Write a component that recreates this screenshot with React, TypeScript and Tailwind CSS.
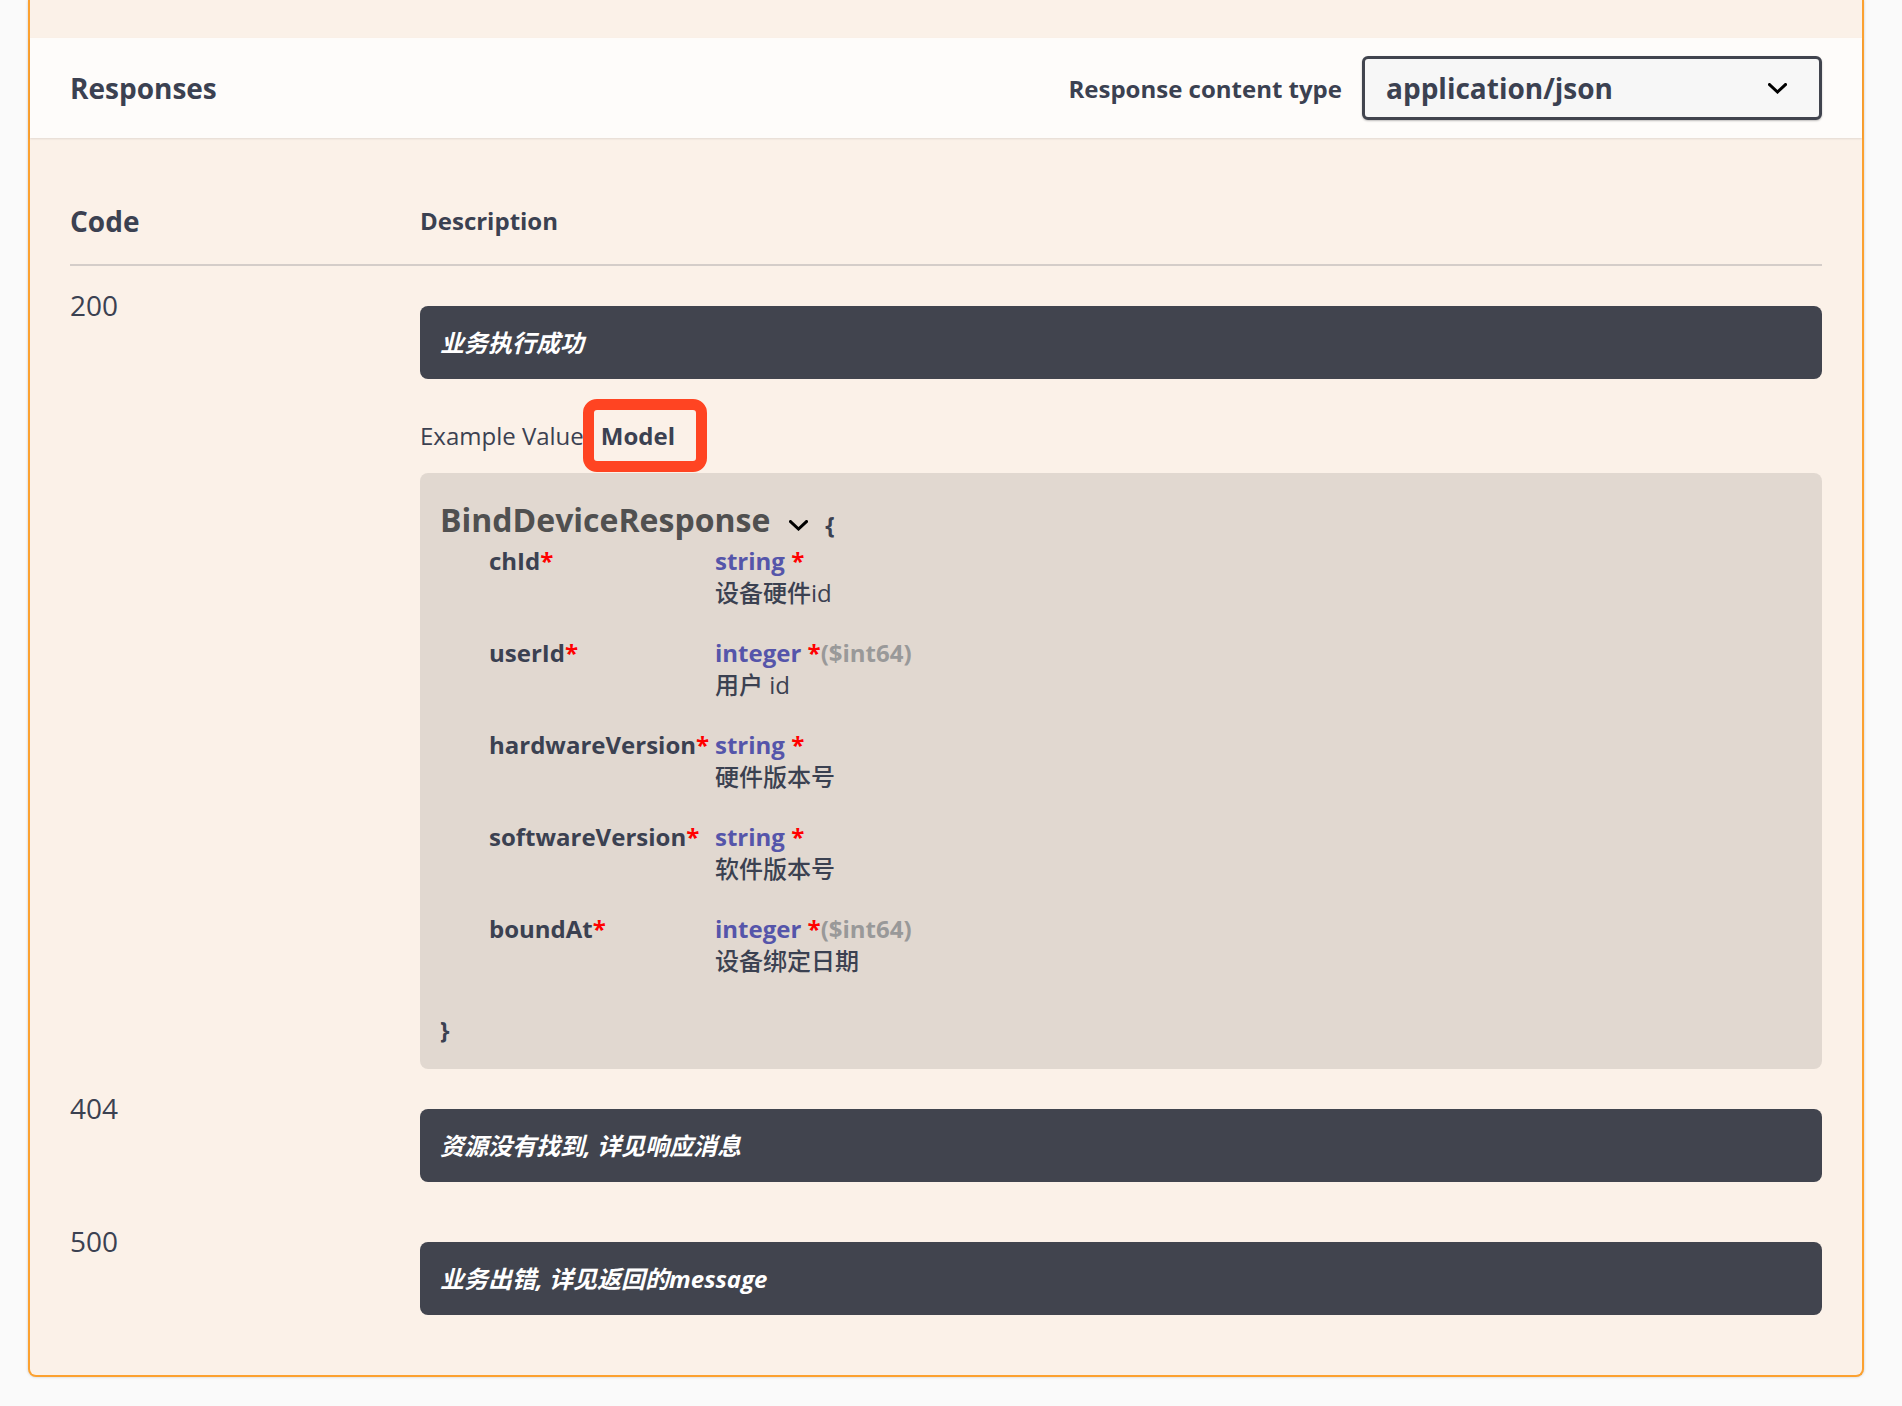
import React from 'react'

type Prop = {
  name: string
  type: string
  format?: string
  desc: string
}

const props: Prop[] = [
  { name: 'chId', type: 'string', desc: '设备硬件id' },
  { name: 'userId', type: 'integer', format: '($int64)', desc: '用户 id' },
  { name: 'hardwareVersion', type: 'string', desc: '硬件版本号' },
  { name: 'softwareVersion', type: 'string', desc: '软件版本号' },
  { name: 'boundAt', type: 'integer', format: '($int64)', desc: '设备绑定日期' },
]

function Chevron({ className }: { className?: string }) {
  return (
    <svg className={className} width="19" height="11" viewBox="0 0 19 11" fill="none">
      <path d="M1.5 1.5 L9.5 9 L17.5 1.5" stroke="#000" strokeWidth="3" strokeLinecap="square" />
    </svg>
  )
}

function DarkBox({ children }: { children: React.ReactNode }) {
  return (
    <div className="my-5 rounded-lg bg-[#41444e] p-5 text-[24px] leading-[33px] font-bold italic text-white">
      {children}
    </div>
  )
}

function Model() {
  return (
    <div className="mt-[21px] rounded-lg bg-black/10 px-5 pt-[25px] pb-[23px]">
      <div className="flex h-[44px] items-center">
        <span className="text-[32px] leading-[44px] font-bold text-[#505050]">BindDeviceResponse</span>
        <Chevron className="mt-[10px] ml-[19px]" />
        <span className="mt-2 ml-[17px] text-[24px] leading-[33px] font-bold">{'{'}</span>
      </div>
      <div className="mt-[3px] flex flex-col">
        {props.map((p) => (
          <div key={p.name} className="mb-[28px] flex pl-[49px] text-[24px] leading-[32px]">
            <div className="w-[226px] font-bold">
              {p.name}
              <span className="text-[#ff0000]">*</span>
            </div>
            <div>
              <div className="font-bold">
                <span className="text-[#5555aa]">{p.type}</span>{' '}
                <span className="text-[#ff0000]">*</span>
                {p.format && <span className="text-[#999999]">{p.format}</span>}
              </div>
              <div className="font-medium">{p.desc}</div>
            </div>
          </div>
        ))}
      </div>
      <div className="pt-[9px] text-[24px] leading-[32px] font-bold">{'}'}</div>
    </div>
  )
}

export default function App() {
  return (
    <div className="min-h-screen bg-[#fafafa] font-['Open_Sans','Noto_Sans_CJK_SC',sans-serif] text-[#3b4151]">
      <div className="ml-[28px] w-[1836px] rounded-b-lg border-2 border-t-0 border-[#fca130] bg-[#fbf1e8] shadow-[0_0_3px_rgba(0,0,0,0.19)]">
        <div className="h-[38px]" />
        <div className="flex h-[100px] items-center justify-between bg-white/80 px-10 shadow-[0_1px_2px_rgba(0,0,0,0.1)]">
          <h4 className="text-[28px] leading-[38px] font-bold">Responses</h4>
          <div className="flex items-center gap-5">
            <label className="text-[24px] leading-[33px] font-bold">Response content type</label>
            <div className="flex h-[64px] w-[460px] items-center justify-between rounded-md border-[3px] border-[#41444e] bg-[#f7f7f7] pr-[32px] pl-[21px] shadow-[0_1px_2px_rgba(0,0,0,0.25)]">
              <span className="text-[28px] leading-[38px] font-bold">application/json</span>
              <Chevron />
            </div>
          </div>
        </div>

        <div className="p-10">
          <div className="flex items-start border-b-2 border-[#3b4151]/20 py-6">
            <div className="w-[350px] text-[28px] leading-[38px] font-bold">Code</div>
            <div className="text-[24px] leading-[38px] font-bold">Description</div>
          </div>

          <div className="flex">
            <div className="w-[350px] pt-5 text-[28px] leading-[38px]">200</div>
            <div className="flex flex-1 flex-col pt-5">
              <DarkBox>业务执行成功</DarkBox>
              <div className="mt-5 flex items-center text-[24px] leading-[33px]">
                <span>Example Value</span>
                <span className="relative ml-[17px] font-bold">
                  Model
                  <span className="absolute -top-5 -right-[32px] -bottom-5 -left-[18px] rounded-[14px] border-[11px] border-[#ff4422]" />
                </span>
              </div>
              <Model />
            </div>
          </div>

          <div className="flex">
            <div className="w-[350px] pt-5 text-[28px] leading-[38px]">404</div>
            <div className="flex flex-1 flex-col pt-5">
              <DarkBox>资源没有找到, 详见响应消息</DarkBox>
            </div>
          </div>

          <div className="flex">
            <div className="w-[350px] pt-5 text-[28px] leading-[38px]">500</div>
            <div className="flex flex-1 flex-col pt-5">
              <DarkBox>业务出错, 详见返回的message</DarkBox>
            </div>
          </div>
        </div>
      </div>
    </div>
  )
}
